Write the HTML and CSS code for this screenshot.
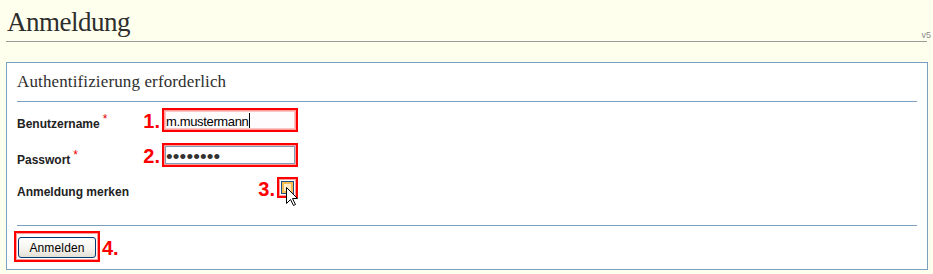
FILE: index.html
```html
<!DOCTYPE html>
<html lang="de">
<head>
<meta charset="utf-8">
<title>Anmeldung</title>
<link rel="stylesheet" href="styles.css">
</head>
<body>
<header class="page-head">
  <h1 class="page-title">Anmeldung</h1>
  <span class="version">v5</span>
</header>
<form class="panel">
  <h2 class="panel-title">Authentifizierung erforderlich</h2>
  <div class="fields">
    <div class="row row-user">
      <label class="label" for="user">Benutzername<span class="req">*</span></label>
      <div class="ctrl">
        <span class="num">1.</span>
        <span class="hl hl-field">
          <input id="user" class="input input-user" type="text" value="m.mustermann">
          <span class="caret"></span>
        </span>
      </div>
    </div>
    <div class="row row-pass">
      <label class="label" for="pass">Passwort<span class="req">*</span></label>
      <div class="ctrl">
        <span class="num">2.</span>
        <span class="hl hl-field">
          <input id="pass" class="input input-pass" type="password" value="geheim12">
        </span>
      </div>
    </div>
    <div class="row row-remember">
      <label class="label" for="remember">Anmeldung merken</label>
      <div class="ctrl">
        <span class="num">3.</span>
        <span class="hl hl-check">
          <input id="remember" class="check" type="checkbox">
          <svg class="cursor" width="13" height="20" viewBox="0 0 13 20" aria-hidden="true">
            <path d="M0.5 0.5 V16.5 L4.5 12.5 L7.5 18.5 L9.5 17.5 L6.5 11.5 H11.5 Z" fill="#fff" stroke="#000" stroke-width="1" stroke-linejoin="miter"/>
          </svg>
        </span>
      </div>
    </div>
  </div>
  <div class="actions">
    <span class="hl hl-btn"><button class="btn" type="button">Anmelden</button></span>
    <span class="num num-btn">4.</span>
  </div>
</form>
</body>
</html>
```

FILE: styles.css
```css
* {
  box-sizing: border-box;
}

html, body {
  margin: 0;
  padding: 0;
}

body {
  width: 933px;
  height: 274px;
  overflow: hidden;
  background: #ffffee;
  font-family: "Liberation Sans", Arial, sans-serif;
  color: #222;
}

/* page header */
.page-head {
  display: flex;
  align-items: flex-end;
  margin: 0 2px 0 6px;
}

.page-title {
  flex: 1;
  margin: 0;
  padding: 7px 0 4px 1px;
  font-family: "Liberation Serif", "Times New Roman", serif;
  font-weight: normal;
  font-size: 27px;
  line-height: 30px;
  letter-spacing: -0.5px;
  color: #2e2e2e;
  border-bottom: 1px solid #9a9a9a;
}

.version {
  margin: 0 0 2px -6px;
  font-size: 9px;
  line-height: 10px;
  color: #8a8a8a;
}

/* panel */
.panel {
  margin: 20px 5px 0 6px;
  padding: 0 10px 7px;
  background: #fff;
  border: 1px solid #7b9fbf;
}

.panel-title {
  margin: 0;
  padding: 9px 0;
  font-family: "Liberation Serif", "Times New Roman", serif;
  font-weight: normal;
  font-size: 17px;
  line-height: 20px;
  letter-spacing: 0.13px;
  color: #2e2e2e;
  border-bottom: 1px solid #7b9fbf;
}

.fields {
  padding-top: 6px;
}

.row {
  display: flex;
  align-items: flex-start;
}

.row-pass {
  margin-top: 11px;
}

.row-remember {
  margin-top: 10px;
}

.label {
  display: block;
  width: 129px;
  padding-top: 9px;
  font-size: 12px;
  line-height: 14px;
  font-weight: bold;
  color: #222;
}

.row-pass .label {
  padding-top: 10px;
}

.row-remember .label {
  padding-top: 8px;
}

.req {
  margin-left: 3px;
  font-weight: normal;
  font-size: 12px;
  line-height: 0;
  vertical-align: 5px;
  color: #ee0000;
}

.ctrl {
  width: 152px;
  display: flex;
  justify-content: flex-end;
  align-items: flex-start;
  gap: 2px;
}

.num {
  margin-top: 3px;
  font-family: "Liberation Sans", Arial, sans-serif;
  font-weight: bold;
  font-size: 20px;
  line-height: 20px;
  color: #ff0000;
}

.row-remember .num {
  margin-top: 2px;
}

/* red annotation boxes */
.hl {
  display: block;
  position: relative;
  border: 2px solid #ff0000;
  background: #fff;
  box-shadow: inset 0 0 0 1px #ff9c9c;
}

.hl-field {
  padding: 1px;
}

.input {
  display: block;
  width: 130px;
  height: 18px;
  margin: 0;
  padding: 0;
  border: 1px solid #7f9db9;
  background: #fff;
  font-family: "Liberation Sans", Arial, sans-serif;
  color: #000;
  outline: none;
}

.input-user {
  border-color: #ffc4c4;
  background: #fffcfd;
  padding-top: 3px;
  font-size: 13px;
  line-height: 13px;
  letter-spacing: -0.35px;
}

.input-pass {
  padding-top: 4px;
  font-size: 19px;
  line-height: 11px;
  letter-spacing: 0.15px;
  color: #333;
}

.caret {
  position: absolute;
  left: 85px;
  top: 3px;
  width: 1px;
  height: 15px;
  background: #000;
}

.hl-check {
  padding: 2px;
}

.check {
  -webkit-appearance: none;
  appearance: none;
  display: block;
  width: 13px;
  height: 13px;
  margin: 0;
  border: 1px solid #1c5180;
  background: linear-gradient(135deg, #fff6e2, #fbe0a8);
  box-shadow: inset 0 0 0 2px #f7bd52;
  outline: none;
}

.cursor {
  position: absolute;
  left: 7px;
  top: 8px;
  overflow: visible;
}

/* footer with button */
.actions {
  display: flex;
  align-items: flex-start;
  gap: 2px;
  margin-top: 26px;
  padding-top: 5px;
  border-top: 1px solid #7b9fbf;
}

.hl-btn {
  margin-left: -3px;
  padding: 4px 2px 2px 2px;
}

.btn {
  display: block;
  width: 78px;
  height: 21px;
  margin: 0;
  padding: 0;
  border: 1px solid #003c74;
  border-radius: 3px;
  background: linear-gradient(#ffffff, #f5f4ef 55%, #e2dfd5);
  font-family: "Liberation Sans", Arial, sans-serif;
  font-size: 12px;
  line-height: 14px;
  letter-spacing: 0.15px;
  color: #000;
}

.num-btn {
  margin-top: 7px;
}
```
